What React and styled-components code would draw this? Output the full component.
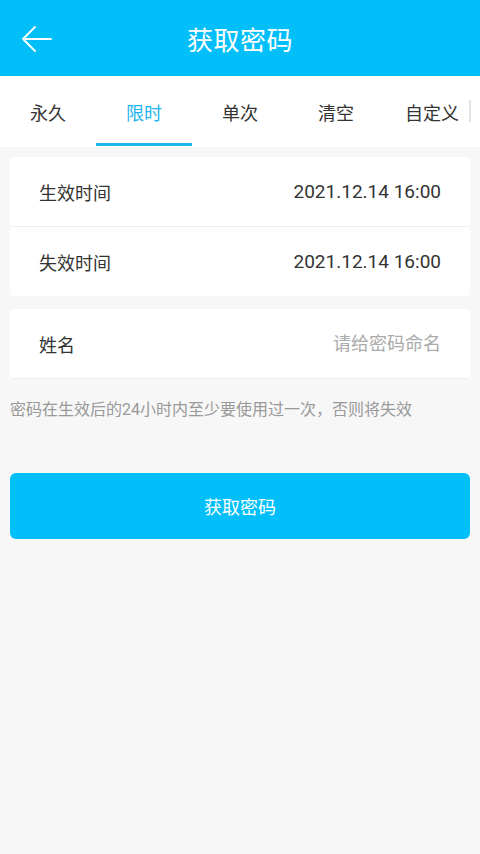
import React, { useState } from 'react'
import styled, { createGlobalStyle } from 'styled-components'

const GlobalStyle = createGlobalStyle`
  html, body {
    margin: 0;
    padding: 0;
    background: #f7f7f7;
    font-family: Roboto, "Noto Sans CJK SC", sans-serif;
  }
`

const Page = styled.div`
  width: 480px;
  min-height: 854px;
  background: #f7f7f7;
`

const Header = styled.div`
  height: 76px;
  background: #02bffa;
  display: flex;
  align-items: center;
  justify-content: center;
  position: relative;
`

const BackButton = styled.div`
  position: absolute;
  left: 20px;
  top: 22px;
  width: 34px;
  height: 34px;
  display: flex;
  align-items: center;
  justify-content: center;
`

const Title = styled.h1`
  margin: 0;
  color: #fff;
  font-size: 26px;
  font-weight: 400;
  letter-spacing: 0.5px;
`

const Tabs = styled.div`
  height: 71px;
  background: #fff;
  display: flex;
  position: relative;
  overflow: hidden;
`

const Tab = styled.div`
  flex: 0 0 96px;
  display: flex;
  align-items: center;
  justify-content: center;
  font-size: 18px;
  color: ${p => (p.active ? '#1db5ea' : '#333')};
  position: relative;
  &::after {
    content: '';
    position: absolute;
    left: 0;
    right: 0;
    bottom: 1px;
    height: 3px;
    background: ${p => (p.active ? '#1db5ea' : 'transparent')};
  }
`

const Edge = styled.div`
  position: absolute;
  right: 9px;
  top: 24px;
  width: 2px;
  height: 22px;
  background: #e2e2e2;
`

const Card = styled.div`
  margin: ${p => p.top}px 10px 0;
  background: #fff;
  border-radius: 4px;
  overflow: hidden;
`

const Row = styled.div`
  height: 69px;
  display: flex;
  align-items: center;
  justify-content: space-between;
  padding: 0 29px;
  border-bottom: 1px solid #eeeeee;
  &:last-child {
    border-bottom: ${p => (p.underline ? '1px solid #eeeeee' : 'none')};
  }
`

const Label = styled.span`
  font-size: 18px;
  color: #333;
`

const Value = styled.span`
  font-size: 19px;
  color: #333;
`

const NameInput = styled.input`
  border: none;
  outline: none;
  text-align: right;
  font-size: 18px;
  font-family: inherit;
  color: #333;
  width: 220px;
  padding: 0;
  background: transparent;
  &::placeholder {
    color: #aaa;
  }
`

const Note = styled.p`
  margin: 20px 10px 0;
  font-size: 16px;
  line-height: 22px;
  color: #999;
`

const Submit = styled.button`
  display: block;
  width: 460px;
  height: 66px;
  margin: 52px 10px 0;
  border: none;
  border-radius: 6px;
  background: #02bffa;
  color: #fff;
  font-size: 18px;
  font-family: inherit;
`

const tabs = ['永久', '限时', '单次', '清空', '自定义']

export default function App() {
  const [active, setActive] = useState(1)
  return (
    <Page>
      <GlobalStyle />
      <Header>
        <BackButton>
          <svg width="32" height="32" viewBox="0 0 32 32" fill="none" stroke="#fff" strokeWidth="1.8" strokeLinecap="round" strokeLinejoin="round">
            <path d="M30 16H2M14 4L2 16l12 12" />
          </svg>
        </BackButton>
        <Title>获取密码</Title>
      </Header>
      <Tabs>
        {tabs.map((t, i) => (
          <Tab key={t} active={i === active} onClick={() => setActive(i)}>{t}</Tab>
        ))}
        <Edge />
      </Tabs>
      <Card top={10}>
        <Row>
          <Label>生效时间</Label>
          <Value>2021.12.14 16:00</Value>
        </Row>
        <Row>
          <Label>失效时间</Label>
          <Value>2021.12.14 16:00</Value>
        </Row>
      </Card>
      <Card top={13}>
        <Row underline>
          <Label>姓名</Label>
          <NameInput placeholder="请给密码命名" />
        </Row>
      </Card>
      <Note>密码在生效后的24小时内至少要使用过一次，否则将失效</Note>
      <Submit>获取密码</Submit>
    </Page>
  )
}
